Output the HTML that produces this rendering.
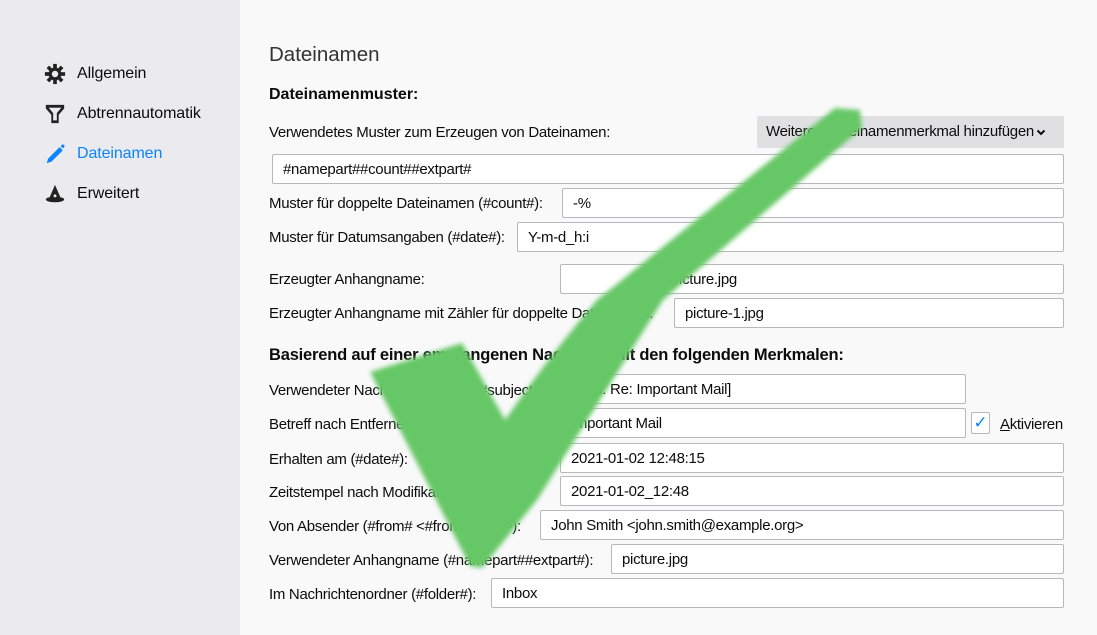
<!DOCTYPE html>
<html><head><meta charset="utf-8"><style>
*{margin:0;padding:0;box-sizing:border-box}
body{width:1097px;height:635px;overflow:hidden;background:#f9f9fa;font-family:"Liberation Sans",sans-serif;color:#0c0c0d;position:relative}
#side{position:absolute;left:0;top:0;width:240px;height:635px;background:#ebeaef}
.nav{position:absolute;left:77px;font-size:16px;letter-spacing:-0.1px}
.ic{position:absolute;left:44px;width:22px;height:22px}
.t{position:absolute;font-size:15px;white-space:nowrap;letter-spacing:-0.3px}
.in{position:absolute;background:#fff;border:1px solid #b8b8bc;border-radius:2px;font-size:15px;padding-left:10px;padding-top:2px;line-height:26px;white-space:nowrap;letter-spacing:-0.3px}
</style></head><body>
<div id="side">
<svg class="ic" style="top:63px" viewBox="0 0 24 24"><g fill="#222"><circle cx="12" cy="12" r="7"/><rect x="10" y="1" width="4" height="22"/><rect x="1" y="10" width="22" height="4"/><rect x="10" y="1" width="4" height="22" transform="rotate(45 12 12)"/><rect x="10" y="1" width="4" height="22" transform="rotate(-45 12 12)"/></g><circle cx="12" cy="12" r="3.5" fill="#ebeaef"/></svg>
<div class="nav" style="top:65px">Allgemein</div>
<svg class="ic" style="top:103px" viewBox="0 0 24 24"><path d="M2 2h20v4l-6 7v9h-8v-9L2 6z" fill="#222"/><path d="M5 5h14l-5 6v8h-4v-8z" fill="#ebeaef"/><path d="M4 3h16v2H4z" fill="#222"/></svg>
<div class="nav" style="top:105px">Abtrennautomatik</div>
<svg class="ic" style="top:143px" viewBox="0 0 24 24"><path d="M3 22l1.5-5L17 4.5l3.5 3.5L8 20.5z" fill="#0a84ff"/><circle cx="20.5" cy="3.5" r="1.8" fill="#0a84ff"/></svg>
<div class="nav" style="top:145px;color:#0a84ff">Dateinamen</div>
<svg class="ic" style="top:183px" viewBox="0 0 24 24"><path d="M12 2l6 14H6z" fill="#222"/><ellipse cx="12" cy="18" rx="10" ry="3" fill="#222"/><circle cx="12" cy="14" r="1.6" fill="#ebeaef"/></svg>
<div class="nav" style="top:185px">Erweitert</div>
</div>

<div class="t" style="left:269px;top:43px;font-size:20.5px;color:#333;letter-spacing:0">Dateinamen</div>
<div class="t" style="left:269px;top:86px;font-size:16px;font-weight:bold;letter-spacing:0">Dateinamenmuster:</div>
<div class="t" style="left:269px;top:124px">Verwendetes Muster zum Erzeugen von Dateinamen:</div>
<div style="position:absolute;left:757px;top:116px;width:307px;height:32px;background:#e0e0e3;border-radius:2px;font-size:15px;line-height:32px;padding-left:9px;letter-spacing:-0.3px;white-space:nowrap">Weiteres Dateinamenmerkmal hinzufügen<svg width="10" height="8" viewBox="0 0 10 8" style="margin-left:2px"><path d="M1.5 2.5L5 6 8.5 2.5" stroke="#0c0c0d" stroke-width="2" fill="none"/></svg></div>
<div class="in" style="left:272px;top:154px;width:792px;height:30px">#namepart##count##extpart#</div>
<div class="t" style="left:269px;top:195px">Muster für doppelte Dateinamen (#count#):</div>
<div class="in" style="left:562px;top:188px;width:502px;height:30px">-%</div>
<div class="t" style="left:269px;top:229px">Muster für Datumsangaben (#date#):</div>
<div class="in" style="left:517px;top:222px;width:547px;height:30px">Y-m-d_h:i</div>
<div class="t" style="left:269px;top:271px">Erzeugter Anhangname:</div>
<div class="in" style="left:560px;top:264px;width:504px;height:30px;padding-left:110px">picture.jpg</div>
<div class="t" style="left:269px;top:305px">Erzeugter Anhangname mit Zähler für doppelte Dateinamen:</div>
<div class="in" style="left:674px;top:298px;width:390px;height:30px">picture-1.jpg</div>
<div class="t" style="left:269px;top:346px;font-size:16.5px;font-weight:bold;letter-spacing:-0.2px">Basierend auf einer empfangenen Nachricht mit den folgenden Merkmalen:</div>
<div class="t" style="left:269px;top:382px">Verwendeter Nachrichtenbetreff (#subject#):</div>
<div class="in" style="left:560px;top:374px;width:406px;height:30px">[Fwd: Re: Important Mail]</div>
<div class="t" style="left:269px;top:416px">Betreff nach Entfernen von Re:, Fw.:</div>
<div class="in" style="left:560px;top:408px;width:406px;height:30px">Important Mail</div>
<div style="position:absolute;left:971px;top:412px;width:19px;height:22px;background:#fff;border:1px solid #b8b8bc;border-radius:2px;color:#0a84ff;font-size:17px;line-height:20px;text-align:center">&#10003;</div>
<div class="t" style="left:1000px;top:416px"><u>A</u>ktivieren</div>
<div class="t" style="left:269px;top:451px">Erhalten am (#date#):</div>
<div class="in" style="left:560px;top:443px;width:504px;height:30px">2021-01-02 12:48:15</div>
<div class="t" style="left:269px;top:484px">Zeitstempel nach Modifikation:</div>
<div class="in" style="left:560px;top:476px;width:504px;height:30px">2021-01-02_12:48</div>
<div class="t" style="left:269px;top:518px">Von Absender (#from# &lt;#fromemail#&gt;):</div>
<div class="in" style="left:540px;top:510px;width:524px;height:30px">John Smith &lt;john.smith@example.org&gt;</div>
<div class="t" style="left:269px;top:552px">Verwendeter Anhangname (#namepart##extpart#):</div>
<div class="in" style="left:611px;top:544px;width:453px;height:30px">picture.jpg</div>
<div class="t" style="left:269px;top:586px">Im Nachrichtenordner (#folder#):</div>
<div class="in" style="left:491px;top:578px;width:573px;height:30px">Inbox</div>

<svg style="position:absolute;left:0;top:0" width="1097" height="635"><defs><filter id="b"><feGaussianBlur stdDeviation="2.5"/></filter></defs>
<path d="M370 372 L462 343 L505 420 Q550 355 597 300 L835 108 L860 110 L862 128 L663 300 Q600 400 537 500 L482 568 L470 566 Z" fill="#66c766" filter="url(#b)"/></svg>
</body></html>
